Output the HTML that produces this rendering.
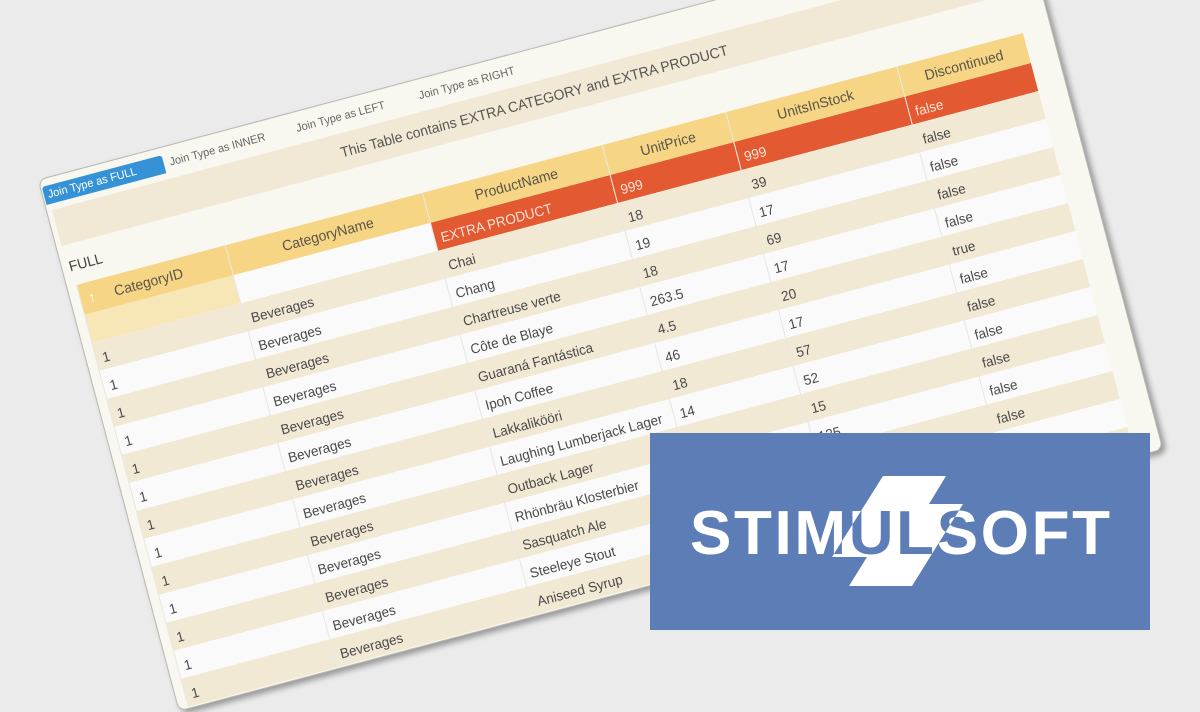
<!DOCTYPE html>
<html><head><meta charset="utf-8"><style>
*{margin:0;padding:0;box-sizing:border-box}
html,body{width:1200px;height:630px;overflow:hidden;background:#ebebeb;font-family:"Liberation Sans",sans-serif}
#w{position:absolute;left:0;top:0;width:0;height:0;transform-origin:0 0;transform:matrix(.9663,-.2571,.265,1,76,285)}
.card{position:absolute;left:-10px;top:-108px;width:1019px;height:532px;background:#f9f8f0;border-radius:8px;border:1px solid #b9b9b2;box-shadow:3px 4px 6px rgba(0,0,0,.35)}
.tab{position:absolute;top:-100px;height:18px;font-size:11px;line-height:18px;color:#666;padding-left:4px;white-space:nowrap}
.tab.a{background:#3592d6;color:#fff;border-radius:3px 3px 0 0;width:124px}
.band{position:absolute;left:-4px;top:-76px;width:1000px;height:36px;background:#f1e9d5}
.title{position:absolute;left:0;top:-66px;width:980px;text-align:center;font-size:14px;color:#555}
.full{position:absolute;left:-2px;top:-27px;font-size:14px;color:#444}
table{position:absolute;left:0;top:0;border-collapse:collapse;table-layout:fixed;width:979px}
td{height:28px;font-size:13.5px;color:#4a4a4a;padding-left:6px;padding-top:4px;white-space:nowrap;overflow:hidden;border-left:1px solid rgba(0,0,0,.07)}
tr.h td{height:30px;background:#f6d585;text-align:center;font-size:14px;color:#5a5448;padding:0}
tr:nth-child(even) td{background:#fafafa}
tr:nth-child(odd) td{background:#f2e9d5}
tr.h td{background:#f6d585}
td.r{background:#e35a32 !important;color:#fde2d4}
td.ly{background:#f8e7b6 !important}
.logo{position:absolute;left:650px;top:433px;width:500px;height:197px;background:#5d7db6}
</style></head><body>
<div id="w">
<div class="card"></div>
<div class="tab a" style="left:-8px">Join Type as FULL</div>
<div class="tab" style="left:118px">Join Type as INNER</div>
<div class="tab" style="left:249px">Join Type as LEFT</div>
<div class="tab" style="left:376px">Join Type as RIGHT</div>
<div class="band"></div>
<div class="title">This Table contains EXTRA CATEGORY and EXTRA PRODUCT</div>
<div class="full">FULL</div>
<table>
<colgroup><col style="width:154px"><col style="width:204px"><col style="width:186px"><col style="width:128px"><col style="width:177px"><col style="width:130px"></colgroup>
<tr class="h"><td style="text-align:left;padding-left:8px"><span style="color:#fff">↑</span>&nbsp;&nbsp;&nbsp;&nbsp;&nbsp;CategoryID</td><td>CategoryName</td><td>ProductName</td><td>UnitPrice</td><td>UnitsInStock</td><td>Discontinued</td></tr>
<tr><td class="ly"></td><td></td><td class="r">EXTRA PRODUCT</td><td class="r">999</td><td class="r">999</td><td class="r">false</td></tr>
<tr><td>1</td><td>Beverages</td><td>Chai</td><td>18</td><td>39</td><td>false</td></tr>
<tr><td>1</td><td>Beverages</td><td>Chang</td><td>19</td><td>17</td><td>false</td></tr>
<tr><td>1</td><td>Beverages</td><td>Chartreuse verte</td><td>18</td><td>69</td><td>false</td></tr>
<tr><td>1</td><td>Beverages</td><td>Côte de Blaye</td><td>263.5</td><td>17</td><td>false</td></tr>
<tr><td>1</td><td>Beverages</td><td>Guaraná Fantástica</td><td>4.5</td><td>20</td><td>true</td></tr>
<tr><td>1</td><td>Beverages</td><td>Ipoh Coffee</td><td>46</td><td>17</td><td>false</td></tr>
<tr><td>1</td><td>Beverages</td><td>Lakkalikööri</td><td>18</td><td>57</td><td>false</td></tr>
<tr><td>1</td><td>Beverages</td><td>Laughing Lumberjack Lager</td><td>14</td><td>52</td><td>false</td></tr>
<tr><td>1</td><td>Beverages</td><td>Outback Lager</td><td>15</td><td>15</td><td>false</td></tr>
<tr><td>1</td><td>Beverages</td><td>Rhönbräu Klosterbier</td><td>7.75</td><td>125</td><td>false</td></tr>
<tr><td>1</td><td>Beverages</td><td>Sasquatch Ale</td><td>14</td><td>111</td><td>false</td></tr>
<tr><td>1</td><td>Beverages</td><td>Steeleye Stout</td><td>18</td><td>20</td><td>false</td></tr>
<tr><td>1</td><td>Beverages</td><td>Aniseed Syrup</td><td>10</td><td>13</td><td>false</td></tr>
</table>
</div>
<div class="logo">
<svg width="500" height="197" viewBox="0 0 500 197">
<defs>
<clipPath id="cb"><polygon points="233,43 296,43 279,71 313,71 262,153 199,153 217,124 182,124"/></clipPath>
<mask id="mb"><rect width="500" height="197" fill="#fff"/><polygon points="233,43 296,43 279,71 313,71 262,153 199,153 217,124 182,124" fill="#000"/></mask>
</defs>
<polygon points="233,43 296,43 279,71 313,71 262,153 199,153 217,124 182,124" fill="#fff"/>
<text x="40" y="121" font-family="Liberation Sans, sans-serif" font-weight="bold" font-size="62" textLength="420" lengthAdjust="spacing" fill="#fff" mask="url(#mb)">STIMULSOFT</text>
<text x="40" y="121" font-family="Liberation Sans, sans-serif" font-weight="bold" font-size="62" textLength="420" lengthAdjust="spacing" fill="#5d7db6" clip-path="url(#cb)">STIMULSOFT</text>
</svg>
</div>
</body></html>
